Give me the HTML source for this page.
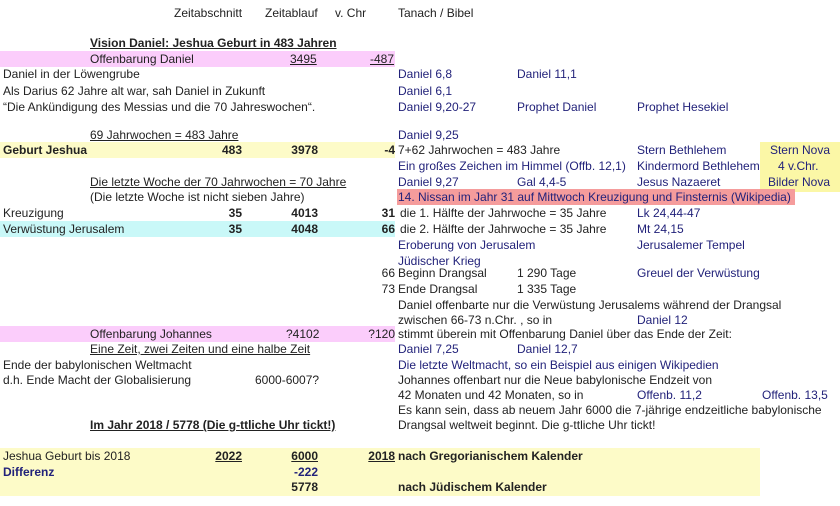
<!DOCTYPE html>
<html><head><meta charset="utf-8"><style>
body{margin:0;width:840px;height:506px;background:#fff;position:relative;overflow:hidden;font-family:"Liberation Sans",Arial,sans-serif;font-size:12px;color:#222}
.c{position:absolute;white-space:nowrap;line-height:16px;height:16px}
.r{text-align:right}
.b{font-weight:bold}
.u{text-decoration:underline}
.bl{color:#22227a}
.bg{position:absolute}
</style></head><body>
<div class="bg" style="left:0;top:51px;width:395px;height:16px;background:#fbcdfb"></div>
<div class="bg" style="left:0;top:142px;width:395px;height:16px;background:#fdfbc8"></div>
<div class="bg" style="left:760px;top:142px;width:80px;height:50px;background:#fbf7a6"></div>
<div class="bg" style="left:397px;top:189px;width:398px;height:16px;background:#f59c9c"></div>
<div class="bg" style="left:0;top:221px;width:395px;height:16px;background:#c9f8f8"></div>
<div class="bg" style="left:0;top:326px;width:395px;height:16px;background:#fbcdfb"></div>
<div class="bg" style="left:0;top:448px;width:760px;height:48px;background:#fdfbc8"></div>

<div class="c" style="left:174px;top:5px">Zeitabschnitt</div>
<div class="c" style="left:265px;top:5px">Zeitablauf</div>
<div class="c" style="left:335px;top:5px">v. Chr</div>
<div class="c" style="left:398px;top:5px">Tanach / Bibel</div>

<div class="c b u" style="left:90px;top:35px">Vision Daniel: Jeshua Geburt in 483 Jahren</div>
<div class="c" style="left:90px;top:51px">Offenbarung Daniel</div>
<div class="c u" style="left:290px;top:51px">3495</div>
<div class="c u" style="left:370px;top:51px">-487</div>
<div class="c" style="left:3px;top:66px">Daniel in der Löwengrube</div>
<div class="c bl" style="left:398px;top:66px">Daniel 6,8</div>
<div class="c bl" style="left:517px;top:66px">Daniel 11,1</div>
<div class="c" style="left:3px;top:83px">Als Darius 62 Jahre alt war, sah Daniel in Zukunft</div>
<div class="c bl" style="left:398px;top:83px">Daniel 6,1</div>
<div class="c" style="left:3px;top:99px">“Die Ankündigung des Messias und die 70 Jahreswochen“.</div>
<div class="c bl" style="left:398px;top:99px">Daniel 9,20-27</div>
<div class="c bl" style="left:517px;top:99px">Prophet Daniel</div>
<div class="c bl" style="left:637px;top:99px">Prophet Hesekiel</div>

<div class="c u" style="left:90px;top:127px">69 Jahrwochen = 483 Jahre</div>
<div class="c bl" style="left:398px;top:127px">Daniel 9,25</div>
<div class="c b" style="left:3px;top:142px">Geburt Jeshua</div>
<div class="c b r" style="left:200px;top:142px;width:42px">483</div>
<div class="c b r" style="left:270px;top:142px;width:48px">3978</div>
<div class="c b r" style="left:360px;top:142px;width:35px">-4</div>
<div class="c" style="left:398px;top:142px">7+62 Jahrwochen = 483 Jahre</div>
<div class="c bl" style="left:637px;top:142px">Stern Bethlehem</div>
<div class="c bl r" style="left:760px;top:142px;width:70px">Stern Nova</div>
<div class="c bl" style="left:398px;top:158px">Ein großes Zeichen im Himmel (Offb. 12,1)</div>
<div class="c bl" style="left:637px;top:158px">Kindermord Bethlehem</div>
<div class="c bl" style="left:778px;top:158px">4 v.Chr.</div>
<div class="c u" style="left:90px;top:174px">Die letzte Woche der 70 Jahrwochen = 70 Jahre</div>
<div class="c bl" style="left:398px;top:174px">Daniel 9,27</div>
<div class="c bl" style="left:517px;top:174px">Gal 4,4-5</div>
<div class="c bl" style="left:637px;top:174px">Jesus Nazaeret</div>
<div class="c bl" style="left:768px;top:174px">Bilder Nova</div>
<div class="c" style="left:90px;top:189px">(Die letzte Woche ist nicht sieben Jahre)</div>
<div class="c bl" style="left:398px;top:189px">14. Nissan im Jahr 31 auf Mittwoch Kreuzigung und Finsternis (Wikipedia)</div>
<div class="c" style="left:3px;top:205px">Kreuzigung</div>
<div class="c b r" style="left:200px;top:205px;width:42px">35</div>
<div class="c b r" style="left:270px;top:205px;width:48px">4013</div>
<div class="c b r" style="left:360px;top:205px;width:35px">31</div>
<div class="c" style="left:400px;top:205px">die 1. Hälfte der Jahrwoche = 35 Jahre</div>
<div class="c bl" style="left:637px;top:205px">Lk 24,44-47</div>
<div class="c" style="left:3px;top:221px">Verwüstung Jerusalem</div>
<div class="c b r" style="left:200px;top:221px;width:42px">35</div>
<div class="c b r" style="left:270px;top:221px;width:48px">4048</div>
<div class="c b r" style="left:360px;top:221px;width:35px">66</div>
<div class="c" style="left:400px;top:221px">die 2. Hälfte der Jahrwoche = 35 Jahre</div>
<div class="c bl" style="left:637px;top:221px">Mt 24,15</div>
<div class="c bl" style="left:398px;top:237px">Eroberung von Jerusalem</div>
<div class="c bl" style="left:637px;top:237px">Jerusalemer Tempel</div>
<div class="c bl" style="left:398px;top:253px">Jüdischer Krieg</div>
<div class="c r" style="left:360px;top:265px;width:35px">66</div>
<div class="c" style="left:398px;top:265px">Beginn Drangsal</div>
<div class="c" style="left:517px;top:265px">1 290 Tage</div>
<div class="c bl" style="left:637px;top:265px">Greuel der Verwüstung</div>
<div class="c r" style="left:360px;top:281px;width:35px">73</div>
<div class="c" style="left:398px;top:281px">Ende Drangsal</div>
<div class="c" style="left:517px;top:281px">1 335 Tage</div>
<div class="c" style="left:398px;top:297px">Daniel offenbarte nur die Verwüstung Jerusalems während der Drangsal</div>
<div class="c" style="left:398px;top:312px">zwischen 66-73 n.Chr. , so in</div>
<div class="c bl" style="left:637px;top:312px">Daniel 12</div>
<div class="c" style="left:90px;top:326px">Offenbarung Johannes</div>
<div class="c" style="left:286px;top:326px">?4102</div>
<div class="c r" style="left:360px;top:326px;width:35px">?120</div>
<div class="c" style="left:398px;top:326px">stimmt überein mit Offenbarung Daniel über das Ende der Zeit:</div>
<div class="c u" style="left:90px;top:341px">Eine Zeit, zwei Zeiten und eine halbe Zeit</div>
<div class="c bl" style="left:398px;top:341px">Daniel 7,25</div>
<div class="c bl" style="left:517px;top:341px">Daniel 12,7</div>
<div class="c" style="left:3px;top:357px">Ende der babylonischen Weltmacht</div>
<div class="c bl" style="left:398px;top:357px">Die letzte Weltmacht, so ein Beispiel aus einigen Wikipedien</div>
<div class="c" style="left:3px;top:372px">d.h. Ende Macht der Globalisierung</div>
<div class="c" style="left:255px;top:372px">6000-6007?</div>
<div class="c" style="left:398px;top:372px">Johannes offenbart nur die Neue babylonische Endzeit von</div>
<div class="c" style="left:398px;top:387px">42 Monaten und 42 Monaten, so in</div>
<div class="c bl" style="left:637px;top:387px">Offenb. 11,2</div>
<div class="c bl" style="left:762px;top:387px">Offenb. 13,5</div>
<div class="c" style="left:398px;top:402px">Es kann sein, dass ab neuem Jahr 6000 die 7-jährige endzeitliche babylonische</div>
<div class="c b u" style="left:90px;top:417px">Im Jahr 2018 / 5778 (Die g-ttliche Uhr tickt!)</div>
<div class="c" style="left:398px;top:417px">Drangsal weltweit beginnt. Die g-ttliche Uhr tickt!</div>

<div class="c" style="left:3px;top:448px">Jeshua Geburt bis 2018</div>
<div class="c b u r" style="left:200px;top:448px;width:42px">2022</div>
<div class="c b u r" style="left:270px;top:448px;width:48px">6000</div>
<div class="c b u r" style="left:360px;top:448px;width:35px">2018</div>
<div class="c b" style="left:398px;top:448px">nach Gregorianischem Kalender</div>
<div class="c b bl" style="left:3px;top:464px">Differenz</div>
<div class="c b bl r" style="left:270px;top:464px;width:48px">-222</div>
<div class="c b r" style="left:270px;top:479px;width:48px">5778</div>
<div class="c b" style="left:398px;top:479px">nach Jüdischem Kalender</div>
</body></html>
